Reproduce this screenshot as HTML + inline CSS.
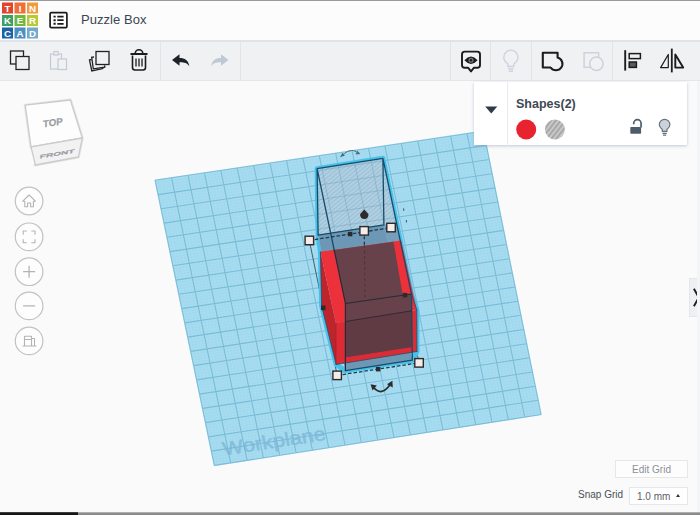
<!DOCTYPE html>
<html><head><meta charset="utf-8"><title>Puzzle Box</title>
<style>
html,body{margin:0;padding:0}
body{width:700px;height:515px;overflow:hidden;position:relative;background:#fafafa;font-family:"Liberation Sans",sans-serif}
#scene{position:absolute;left:0;top:0}
#hdr{position:absolute;left:0;top:0;width:700px;height:40px;background:#fcfcfd;border-top:1px solid #9a9a9a;box-sizing:border-box}
#title{position:absolute;left:81px;top:11px;font-size:13px;color:#3b4550;font-weight:500;letter-spacing:0.05px}
#tb{position:absolute;left:0;top:40px;width:700px;height:41px;background:#f0f1f3;border-top:2px solid #dfe3ea;border-bottom:1px solid #e4e6ea;box-sizing:border-box}
.sep{position:absolute;top:42px;width:1px;height:38px;background:#e2e4e8}
#panel{position:absolute;left:474px;top:81.500px;width:213px;height:63.500px;background:#fff;box-shadow:0 1px 3px rgba(120,140,170,.45)}
#panel .vs{position:absolute;left:33px;top:0;width:1px;height:64px;background:#e8eaee}
#ptitle{position:absolute;left:42px;top:15.5px;font-size:12.5px;font-weight:bold;color:#3f4954}
#editgrid{position:absolute;left:615px;top:460px;width:73px;height:17.500px;border:1px solid #e6e7ea;background:#fdfdfd;font-size:10px;color:#8b9098;text-align:center;line-height:17px;box-sizing:border-box}
#snaplbl{position:absolute;left:578px;top:489px;font-size:10px;color:#4a4f57}
#snapbox{position:absolute;left:629px;top:487px;width:59px;height:18px;border:1px solid #e6e7ea;background:#fff;box-sizing:border-box;font-size:10px;color:#5b6068;line-height:17px;padding-left:7px}
#snapbox i{position:absolute;right:7.500px;top:6px;width:0;height:0;border-left:2.300px solid transparent;border-right:2.300px solid transparent;border-bottom:3px solid #333}
#collapse{position:absolute;left:688.500px;top:278px;width:12px;height:39px;background:#eef0f4;border:1px solid #e3e6eb;box-sizing:border-box}
#bot{position:absolute;left:0;top:512px;width:700px;height:3px;background:linear-gradient(#c4c4c4,#8c8c8c 45%,#8a8a8a)}
#bot b{position:absolute;left:0;top:0.300px;width:78px;height:2.700px;background:linear-gradient(#555,#161616 45%)}
</style></head><body>
<svg id="scene" width="700" height="515" viewBox="0 0 700 515">
<defs>
<pattern id="hatch" width="3.2" height="3.2" patternUnits="userSpaceOnUse" patternTransform="rotate(-40)">
<rect width="3.2" height="1.2" fill="#86a3b8" fill-opacity="0.38"/></pattern>
<pattern id="hatch2" width="3.800" height="3.800" patternUnits="userSpaceOnUse" patternTransform="rotate(-52)">
<rect width="3.800" height="3.800" fill="#c8c8c8"/><rect width="3.800" height="1.800" fill="#a6a6a6"/></pattern>
</defs>
<polygon points="155.2,180.3 483.4,131.2 541.0,414.5 214.4,465.4" fill="#a7dcf1" stroke="#b4e2f3" stroke-width="1.5"/>
<path d="M217.7,464.9L158.5,179.8M213.8,462.5L540.4,411.7M220.9,464.4L161.8,179.3M213.2,459.7L539.8,408.8M224.2,463.9L165.0,178.8M212.6,456.8L539.3,406.0M227.5,463.4L168.3,178.3M212.0,454.0L538.7,403.2M234.0,462.3L174.9,177.4M210.8,448.3L537.5,397.5M237.3,461.8L178.2,176.9M210.3,445.4L537.0,394.7M240.5,461.3L181.5,176.4M209.7,442.6L536.4,391.8M243.8,460.8L184.7,175.9M209.1,439.7L535.8,389.0M250.3,459.8L191.3,174.9M207.9,434.0L534.7,383.3M253.6,459.3L194.6,174.4M207.3,431.2L534.1,380.5M256.9,458.8L197.9,173.9M206.7,428.3L533.5,377.7M260.1,458.3L201.1,173.4M206.1,425.5L532.9,374.8M266.7,457.3L207.7,172.4M204.9,419.8L531.8,369.2M269.9,456.7L211.0,172.0M204.3,416.9L531.2,366.3M273.2,456.2L214.3,171.5M203.7,414.1L530.6,363.5M276.5,455.7L217.6,171.0M203.2,411.2L530.1,360.7M283.0,454.7L224.1,170.0M202.0,405.5L528.9,355.0M286.3,454.2L227.4,169.5M201.4,402.7L528.3,352.2M289.5,453.7L230.7,169.0M200.8,399.8L527.8,349.3M292.8,453.2L234.0,168.5M200.2,397.0L527.2,346.5M299.3,452.2L240.5,167.5M199.0,391.3L526.0,340.8M302.6,451.7L243.8,167.0M198.4,388.4L525.4,338.0M305.8,451.1L247.1,166.6M197.8,385.6L524.9,335.2M309.1,450.6L250.4,166.1M197.2,382.7L524.3,332.3M315.6,449.6L256.9,165.1M196.0,377.0L523.1,326.7M318.9,449.1L260.2,164.6M195.5,374.2L522.6,323.8M322.2,448.6L263.5,164.1M194.9,371.3L522.0,321.0M325.4,448.1L266.8,163.6M194.3,368.5L521.4,318.2M332.0,447.1L273.4,162.6M193.1,362.8L520.3,312.5M335.2,446.6L276.6,162.1M192.5,359.9L519.7,309.7M338.5,446.1L279.9,161.6M191.9,357.1L519.1,306.8M341.8,445.5L283.2,161.2M191.3,354.2L518.5,304.0M348.3,444.5L289.8,160.2M190.1,348.5L517.4,298.3M351.6,444.0L293.0,159.7M189.5,345.7L516.8,295.5M354.8,443.5L296.3,159.2M188.9,342.8L516.2,292.7M358.1,443.0L299.6,158.7M188.4,340.0L515.7,289.8M364.6,442.0L306.2,157.7M187.2,334.3L514.5,284.2M367.9,441.5L309.5,157.2M186.6,331.4L513.9,281.3M371.2,441.0L312.7,156.7M186.0,328.6L513.4,278.5M374.4,440.5L316.0,156.2M185.4,325.7L512.8,275.7M381.0,439.4L322.6,155.3M184.2,320.0L511.6,270.0M384.2,438.9L325.9,154.8M183.6,317.1L511.0,267.2M387.5,438.4L329.1,154.3M183.0,314.3L510.5,264.4M390.8,437.9L332.4,153.8M182.4,311.4L509.9,261.5M397.3,436.9L339.0,152.8M181.2,305.7L508.7,255.9M400.6,436.4L342.3,152.3M180.7,302.9L508.2,253.0M403.8,435.9L345.6,151.8M180.1,300.0L507.6,250.2M407.1,435.4L348.8,151.3M179.5,297.2L507.0,247.4M413.6,434.4L355.4,150.3M178.3,291.5L505.9,241.7M416.9,433.8L358.7,149.9M177.7,288.6L505.3,238.9M420.2,433.3L362.0,149.4M177.1,285.8L504.7,236.0M423.4,432.8L365.2,148.9M176.5,282.9L504.1,233.2M430.0,431.8L371.8,147.9M175.3,277.2L503.0,227.5M433.2,431.3L375.1,147.4M174.7,274.4L502.4,224.7M436.5,430.8L378.4,146.9M174.1,271.5L501.8,221.9M439.8,430.3L381.7,146.4M173.6,268.7L501.3,219.0M446.3,429.3L388.2,145.4M172.4,263.0L500.1,213.4M449.6,428.8L391.5,144.9M171.8,260.1L499.5,210.5M452.8,428.2L394.8,144.5M171.2,257.3L499.0,207.7M456.1,427.7L398.1,144.0M170.6,254.4L498.4,204.9M462.6,426.7L404.6,143.0M169.4,248.7L497.2,199.2M465.9,426.2L407.9,142.5M168.8,245.9L496.6,196.4M469.1,425.7L411.2,142.0M168.2,243.0L496.1,193.5M472.4,425.2L414.5,141.5M167.6,240.2L495.5,190.7M478.9,424.2L421.0,140.5M166.4,234.5L494.3,185.0M482.2,423.7L424.3,140.0M165.9,231.6L493.8,182.2M485.5,423.2L427.6,139.5M165.3,228.8L493.2,179.4M488.7,422.6L430.9,139.1M164.7,225.9L492.6,176.5M495.3,421.6L437.5,138.1M163.5,220.2L491.5,170.9M498.5,421.1L440.7,137.6M162.9,217.4L490.9,168.0M501.8,420.6L444.0,137.1M162.3,214.5L490.3,165.2M505.1,420.1L447.3,136.6M161.7,211.7L489.7,162.4M511.6,419.1L453.9,135.6M160.5,206.0L488.6,156.7M514.9,418.6L457.1,135.1M159.9,203.1L488.0,153.9M518.1,418.1L460.4,134.6M159.3,200.3L487.4,151.0M521.4,417.6L463.7,134.1M158.8,197.4L486.9,148.2M527.9,416.5L470.3,133.2M157.6,191.7L485.7,142.5M531.2,416.0L473.6,132.7M157.0,188.9L485.1,139.7M534.5,415.5L476.8,132.2M156.4,186.0L484.6,136.9M537.7,415.0L480.1,131.7M155.8,183.2L484.0,134.0" stroke="#8ccde4" stroke-width="0.5" opacity="0.28" fill="none"/>
<path d="M214.4,465.4L155.2,180.3M214.4,465.4L541.0,414.5M230.7,462.9L171.6,177.8M211.4,451.1L538.1,400.3M247.1,460.3L188.0,175.4M208.5,436.9L535.2,386.2M263.4,457.8L204.4,172.9M205.5,422.6L532.4,372.0M279.7,455.2L220.8,170.5M202.6,408.4L529.5,357.8M296.1,452.7L237.2,168.0M199.6,394.1L526.6,343.7M312.4,450.1L253.7,165.6M196.6,379.9L523.7,329.5M328.7,447.6L270.1,163.1M193.7,365.6L520.8,315.3M345.0,445.0L286.5,160.7M190.7,351.4L518.0,301.2M361.4,442.5L302.9,158.2M187.8,337.1L515.1,287.0M377.7,439.9L319.3,155.8M184.8,322.9L512.2,272.9M394.0,437.4L335.7,153.3M181.8,308.6L509.3,258.7M410.4,434.9L352.1,150.8M178.9,294.3L506.4,244.5M426.7,432.3L368.5,148.4M175.9,280.1L503.6,230.4M443.0,429.8L384.9,145.9M173.0,265.8L500.7,216.2M459.4,427.2L401.3,143.5M170.0,251.6L497.8,202.0M475.7,424.7L417.8,141.0M167.0,237.3L494.9,187.9M492.0,422.1L434.2,138.6M164.1,223.1L492.0,173.7M508.3,419.6L450.6,136.1M161.1,208.8L489.2,159.5M524.7,417.0L467.0,133.7M158.2,194.6L486.3,145.4M541.0,414.5L483.4,131.2M155.2,180.3L483.4,131.2" stroke="#6fb4d0" stroke-width="1.1" fill="none" opacity="0.8"/>
<text x="0" y="0" transform="matrix(1.1369,-0.1734,0.1990,0.9800,224.0,455.4)" font-family="Liberation Sans, sans-serif" font-weight="normal" font-size="19" fill="#7ab5d6" stroke="#7ab5d6" stroke-width="0.55" opacity="0.72">Workplane</text>
<path d="M309.3,240.4L337.2,375.4M391.0,227.6L419.0,362.8" fill="none" stroke="#1d3b4a" stroke-width="1" opacity="0.75"/>
<polygon points="317.1,168.6 382.9,158.3 411.5,294.0 416.8,310.0 417.0,351.5 412.3,360.2 345.4,370.6 336.1,364.5 321.6,306.0 320.4,251.7 318.1,235.1" fill="none" stroke="#46c1ea" stroke-width="5" stroke-linejoin="round"/>
<polygon points="317.1,168.6 382.9,158.3 411.5,294.0 412.3,360.2 345.4,370.6 318.1,235.1" fill="#b1cfe1" fill-opacity="0.86"/>
<polygon points="317.1,168.6 382.9,158.3 411.5,294.0 412.3,360.2 345.4,370.6 318.1,235.1" fill="url(#hatch)"/>
<clipPath id="cs"><polygon points="317.1,168.6 382.9,158.3 411.5,294.0 412.3,360.2 345.4,370.6 318.1,235.1"/></clipPath>
<path clip-path="url(#cs)" d="M214.4,465.4L155.2,180.3M214.4,465.4L541.0,414.5M230.7,462.9L171.6,177.8M211.4,451.1L538.1,400.3M247.1,460.3L188.0,175.4M208.5,436.9L535.2,386.2M263.4,457.8L204.4,172.9M205.5,422.6L532.4,372.0M279.7,455.2L220.8,170.5M202.6,408.4L529.5,357.8M296.1,452.7L237.2,168.0M199.6,394.1L526.6,343.7M312.4,450.1L253.7,165.6M196.6,379.9L523.7,329.5M328.7,447.6L270.1,163.1M193.7,365.6L520.8,315.3M345.0,445.0L286.5,160.7M190.7,351.4L518.0,301.2M361.4,442.5L302.9,158.2M187.8,337.1L515.1,287.0M377.7,439.9L319.3,155.8M184.8,322.9L512.2,272.9M394.0,437.4L335.7,153.3M181.8,308.6L509.3,258.7M410.4,434.9L352.1,150.8M178.9,294.3L506.4,244.5M426.7,432.3L368.5,148.4M175.9,280.1L503.6,230.4M443.0,429.8L384.9,145.9M173.0,265.8L500.7,216.2M459.4,427.2L401.3,143.5M170.0,251.6L497.8,202.0M475.7,424.7L417.8,141.0M167.0,237.3L494.9,187.9M492.0,422.1L434.2,138.6M164.1,223.1L492.0,173.7M508.3,419.6L450.6,136.1M161.1,208.8L489.2,159.5M524.7,417.0L467.0,133.7M158.2,194.6L486.3,145.4M541.0,414.5L483.4,131.2M155.2,180.3L483.4,131.2" stroke="#6f9fc0" stroke-width="0.8" fill="none" opacity="0.5"/>
<polygon points="318.1,235.1 383.9,224.8 412.3,360.2 345.4,370.6" fill="#6c98b6"/>
<polygon points="383.9,224.8 396.7,223.6 400.6,242.0 387.3,242.0" fill="#759fba"/>
<polygon points="320.4,251.7 335.9,323.0 336.1,364.5 321.6,306.0" fill="#bd242c"/>
<polygon points="335.9,323.0 416.8,310.0 417.0,351.5 336.1,364.5" fill="#dc2b35"/>
<polygon points="320.4,251.7 401.2,240.6 416.8,310.0 335.9,323.0" fill="#ec313b"/>
<polygon points="334.2,250.0 393.5,241.8 402.5,293.8 411.5,294.0 411.7,346.9 345.6,357.2 345.4,303.5" fill="#68424a"/>
<polygon points="345.5,321.5 411.8,310.8 411.7,346.9 345.6,357.2" fill="#603b43"/>
<path d="M317.1,168.6L382.9,158.3M382.9,158.3L411.5,294.0M317.1,168.6L318.1,235.1M382.9,158.3L383.9,224.8M318.1,235.1L383.9,224.8M412.3,360.2L345.4,370.6M317.1,168.6L334.2,250.0M411.5,294.0L412.3,360.2" stroke="#164c69" stroke-width="1.3" fill="none" stroke-linecap="round"/>
<path d="M334.2,250.0L345.4,303.5M345.4,303.5L411.5,294.0M345.4,303.5L345.4,370.6" stroke="#252a3a" stroke-width="1.2" fill="none" stroke-linecap="round"/>
<path d="M411.5,294.0L416.8,310.0M416.8,310.0L417.0,351.5M417.0,351.5L336.1,364.5M336.1,364.5L321.6,306.0M321.6,306.0L320.4,251.7" stroke="#1c4a63" stroke-width="0.9" fill="none" stroke-linecap="round" opacity="0.8"/>
<path d="M345.5,321.5L411.8,310.8" stroke="#2c2430" stroke-width="1" fill="none" opacity="0.85"/>
<path d="M335.9,323.0L336.1,364.5" stroke="#a81c24" stroke-width="0.8" fill="none"/>
<path d="M309.3,240.4L391.0,227.6M337.2,375.4L419.0,362.8" fill="none" stroke="#1d3b4a" stroke-width="1.3" stroke-dasharray="3.5 2"/>
<path d="M364.2,230.8L364.4,245" stroke="#2a2a30" stroke-width="1.2" stroke-dasharray="3 2.5"/>
<path d="M364.4,245L365.0,298.0" stroke="#2a2028" stroke-width="1.1" stroke-dasharray="3 2.5" opacity="0.4"/>
<rect x="305.1" y="236.2" width="8.5" height="8.5" fill="#f6ece8" stroke="#2b2b2b" stroke-width="1.4"/>
<rect x="386.8" y="223.3" width="8.5" height="8.5" fill="#f6ece8" stroke="#2b2b2b" stroke-width="1.4"/>
<rect x="414.8" y="358.6" width="8.5" height="8.5" fill="#f6ece8" stroke="#2b2b2b" stroke-width="1.4"/>
<rect x="332.9" y="371.1" width="8.5" height="8.5" fill="#f6ece8" stroke="#2b2b2b" stroke-width="1.4"/>
<rect x="359.9" y="226.6" width="8.5" height="8.5" fill="#f6ece8" stroke="#2b2b2b" stroke-width="1.4"/>
<rect x="347.9" y="231.8" width="4.5" height="4.5" fill="#2b2b2b"/>
<rect x="402.8" y="292.9" width="4.5" height="4.5" fill="#2b2b2b"/>
<rect x="375.9" y="366.9" width="4.5" height="4.5" fill="#2b2b2b"/>
<rect x="321.0" y="305.6" width="4.5" height="4.5" fill="#2b2b2b"/>
<path d="M364.3,209.5 L368.4,214 A4.2,4.2 0 1 1 360.2,214 Z" fill="#2b2b2b"/>
<g stroke="#2b2b2b" fill="none" stroke-width="1.7" stroke-linecap="round"><path d="M373.8,387.8 Q381.5,396.500 389.800,385"/></g><path d="M370.600,384.300 L376.800,385.500 L372.500,390.600 Z" fill="#2b2b2b"/><path d="M392.400,380.800 L387,384.200 L392.800,387.400 Z" fill="#2b2b2b"/>
<g stroke="#4d6c7e" fill="none" stroke-width="1" stroke-linecap="round" stroke-dasharray="2.2 1"><path d="M342.500,155.300 Q350.500,147.300 357.800,152.600"/></g><path d="M340.200,157.200 L345,155.600 L342.300,152.800 Z" fill="#4d6c7e"/><path d="M360.400,154 L355.600,154.600 L357.300,150.800 Z" fill="#4d6c7e"/>
<path d="M403.700,208.300v2.500M406.400,220v2.500" stroke="#3b5563" stroke-width="1"/>
<!-- view cube -->
<g id="cube">
<polygon points="25.2,105.2 70.4,100 82.3,138 34.800,165 78.400,157 82.300,138 31,146.900" fill="none" stroke="#d9d9d9" stroke-width="3" stroke-linejoin="round" opacity="0.6"/>
<polygon points="25.200,105.200 70.400,100 82.300,138 31,146.900" fill="#fdfdfd" stroke="#cbcbcb" stroke-width="1.300" stroke-linejoin="round"/>
<polygon points="31,146.900 82.300,138 78.400,157 35.400,165" fill="#f2f2f2" stroke="#cbcbcb" stroke-width="1.300" stroke-linejoin="round"/>
<text transform="translate(52.800,126) rotate(-8) skewX(-8)" text-anchor="middle" font-size="9.800" font-weight="bold" fill="#9a9da2" stroke="#9a9da2" stroke-width="0.200">TOP</text>
<text transform="translate(56.800,155.600) rotate(-9.500) skewX(-20) scale(1.300,0.620)" text-anchor="middle" font-size="7.800" font-weight="bold" fill="#9a9da2" stroke="#9a9da2" stroke-width="0.300">FRONT</text>
</g>
<!-- left nav buttons -->
<g fill="#fdfdfd" stroke="#c2c2c2" stroke-width="1.200">
<circle cx="29.1" cy="201" r="13.8"/><circle cx="29.1" cy="236.8" r="13.8"/><circle cx="29.1" cy="271.7" r="13.8"/><circle cx="29.1" cy="305.9" r="13.8"/><circle cx="29.1" cy="340.9" r="13.8"/>
</g>
<g fill="none" stroke="#b4b4b4" stroke-width="1.1" stroke-linejoin="round" stroke-linecap="round">
<path d="M22.8,201.2 L29.1,195 L35.4,201.2 H33.4 V206.8 H30.6 V203 H27.6 V206.8 H24.8 V201.2 Z"/>
<path d="M23.200,234.300V231H26.400 M31.800,231H35V234.300 M35,239.500V242.800H31.800 M26.400,242.800H23.200V239.500"/>
<path d="M23.6,271.7H34.6M29.1,266.2V277.2" stroke-width="1.3"/>
<path d="M23.6,305.9H34.6" stroke-width="1.3"/>
<path d="M24.5,336.2H31.5V346H24.5Z M31.5,338.5H34.5V346H31.5 M24.5,339.5H31.5 M23,346H36"/>
</g>
</svg>

<div id="hdr">
<svg width="700" height="39" style="position:absolute;left:0;top:0">
<g>
<rect x="2" y="1.5" width="11" height="11" fill="#e2452d"/><rect x="14.5" y="1.5" width="11" height="11" fill="#ee6f37"/><rect x="27" y="1.5" width="11" height="11" fill="#f09c3e"/>
<rect x="2" y="14" width="11" height="11" fill="#3f9f63"/><rect x="14.5" y="14" width="11" height="11" fill="#6fb83d"/><rect x="27" y="14" width="11" height="11" fill="#b9c935"/>
<rect x="2" y="26.5" width="11" height="11" fill="#1c64a6"/><rect x="14.5" y="26.5" width="11" height="11" fill="#4a8ec3"/><rect x="27" y="26.5" width="11" height="11" fill="#74a9c9"/>
<g font-family="Liberation Sans, sans-serif" font-weight="bold" font-size="9.8" fill="#fff" text-anchor="middle">
<text x="7.5" y="10.600">T</text><text x="20" y="10.600">I</text><text x="32.5" y="10.600">N</text>
<text x="7.5" y="23.100">K</text><text x="20" y="23.100">E</text><text x="32.5" y="23.100">R</text>
<text x="7.5" y="35.600">C</text><text x="20" y="35.600">A</text><text x="32.5" y="35.600">D</text></g>
</g>
<!-- list icon -->
<g><rect x="50.100" y="11.700" width="16.800" height="15" rx="1.200" fill="#fff" stroke="#1c1c1c" stroke-width="1.700"/>
<path d="M53.500,15.600h2.200M53.500,19.200h2.200M53.500,22.800h2.200" stroke="#1c1c1c" stroke-width="1.900"/>
<path d="M57.300,15.600h6.300M57.300,19.200h6.300M57.300,22.800h6.300" stroke="#1c1c1c" stroke-width="1.700"/></g>
</svg>
<div id="title">Puzzle Box</div>
</div>

<div id="tb"></div>
<div class="sep" style="left:160px"></div><div class="sep" style="left:240px"></div>
<div class="sep" style="left:450px"></div><div class="sep" style="left:490px"></div><div class="sep" style="left:531px"></div><div class="sep" style="left:612px"></div>
<svg width="700" height="40" style="position:absolute;left:0;top:41px" viewBox="0 41 700 40">
<!-- copy -->
<g fill="#f0f1f3" stroke="#222" stroke-width="1.3"><rect x="10.5" y="51" width="13" height="13"/><rect x="16" y="56.5" width="13" height="13"/></g>
<!-- paste (disabled) -->
<g fill="#f0f1f3" stroke="#c3cbd6" stroke-width="1.2"><rect x="50.5" y="54" width="11" height="15"/><rect x="54" y="51.5" width="4" height="3.5"/><rect x="58" y="59" width="8.5" height="10.5"/></g>
<!-- duplicate -->
<g fill="#f0f1f3" stroke="#222" stroke-width="1.3"><path d="M91.5,59.5 l-2,0.4 2.3,11 11,-2.3 -0.3,-1.6"/><path d="M94,57 l-2.3,0.3 1.6,11.5 11.5,-1.6 -0.2,-1.8"/><rect x="96" y="51.5" width="13" height="13"/></g>
<!-- trash -->
<g fill="none" stroke="#1c1c1c" stroke-width="1.6" stroke-linejoin="round"><path d="M132.5,55.5 V67.5 a2.5,2.5 0 0 0 2.5,2.5 h8 a2.5,2.5 0 0 0 2.5,-2.5 V55.5"/><path d="M130.5,54 H147.5" stroke-width="2"/><path d="M135.200,53.500 a3.800,3.800 0 0 1 7.600,0"/><path d="M136,58.5V66.5M139,58.5V66.5M142,58.5V66.5" stroke-width="1.3"/></g>
<!-- undo -->
<path d="M172,60 L179.5,54.3 V58 C185,58 188.5,60.5 189.3,66.3 C187,62.8 184,62.2 179.5,62.3 V65.8 Z" fill="#1e2329"/>
<!-- redo -->
<path d="M228.5,60 L221,54.3 V58 C215.5,58 212,60.5 211.2,66.3 C213.5,62.8 216.5,62.2 221,62.3 V65.8 Z" fill="#bfc9d6"/>
<!-- comment eye -->
<g fill="none" stroke="#1c1c1c" stroke-width="1.9" stroke-linejoin="round"><path d="M464.8,51.6 h12.4 a2.8,2.8 0 0 1 2.8,2.8 v10.600 a2.8,2.8 0 0 1 -2.8,2.8 h-3.4 l-2.8,3.600 -2.8,-3.600 h-3.400 a2.8,2.8 0 0 1 -2.8,-2.8 v-10.600 a2.8,2.8 0 0 1 2.8,-2.8 z"/></g>
<path d="M464.400,60.200 q6.600,-7.400 13.200,0 q-6.600,7.400 -13.200,0 z" fill="#1c1c1c"/><circle cx="471" cy="60.200" r="2.500" fill="#7b7b7b"/><circle cx="471" cy="60.200" r="1.200" fill="#1c1c1c"/>
<!-- bulb disabled -->
<g fill="none" stroke="#ccd4de" stroke-width="1.4"><path d="M508,66.500 v-2.500 c-3,-2.200 -4.200,-4.400 -4.200,-6.800 a7.050,7.050 0 0 1 14.100,0 c0,2.400 -1.200,4.600 -4.200,6.800 v2.500 z"/><path d="M508.200,69h5.400M508.800,71.200h4.200"/></g>
<!-- shape (group) -->
<path d="M542.800,52.800 H557.600 V57.500 A6.500,6.500 0 1 1 550.600,67.500 H542.800 Z" fill="none" stroke="#1c1c1c" stroke-width="2.100" stroke-linejoin="round"/>
<!-- ungroup disabled -->
<g fill="none" stroke="#ccd3dc" stroke-width="1.500"><rect x="584.100" y="52.800" width="14.500" height="14.500"/><circle cx="596.400" cy="63.800" r="6.700" fill="#f0f1f3"/></g>
<!-- align -->
<g fill="none" stroke="#1c1c1c"><path d="M625.200,50.200V70.600" stroke-width="1.900"/><rect x="629.200" y="53.600" width="11.200" height="5" stroke-width="1.500"/><rect x="629.200" y="62" width="7.200" height="5.400" stroke-width="1.500" fill="#5a5a5a"/></g>
<!-- mirror -->
<g fill="none" stroke="#1c1c1c" stroke-linejoin="round"><path d="M671.800,48.600V72.400" stroke-width="1.800"/><path d="M668.300,54.500 V67.600 H660.600 Z" stroke-width="1.200"/><path d="M675.300,54.500 V67.600 H683.200 Z" stroke-width="1.900"/></g>
</svg>

<div id="panel"><div class="vs"></div><div id="ptitle">Shapes(2)</div>
<svg width="213" height="64" style="position:absolute;left:0;top:0">
<path d="M11.200,24.600 h12.100 l-6.050,6.900 z" fill="#2f3b4a"/>
<circle cx="52.200" cy="47.500" r="10" fill="#e8222e"/>
<circle cx="80.900" cy="47.500" r="10" fill="url(#hatch2)"/>
<g><rect x="156.300" y="44.900" width="10.800" height="6.800" rx="0.800" fill="#4f5d6b"/><path d="M159.700,42.300 v-0.900 a3.700,3.700 0 0 1 7.400,0 v4" fill="none" stroke="#4f5d6b" stroke-width="1.700"/></g>
<g fill="none" stroke="#66727e" stroke-width="1.200"><path d="M188.300,49.300 v-1.700 c-2.200,-1.600 -3,-3.200 -3,-5 a5.300,5.300 0 0 1 10.600,0 c0,1.800 -0.800,3.400 -3,5 v1.700 z" fill="#ccd2d9"/><path d="M188.400,51.300h4.400M189,53.100h3.200"/></g>
</svg></div>

<div id="collapse"><svg width="11" height="37" style="position:absolute;left:0;top:0"><path d="M3.900,9.800 L8.800,18.500 L3.900,27.300" fill="none" stroke="#1e1e22" stroke-width="1.9"/></svg></div>
<div id="editgrid">Edit Grid</div>
<div id="snaplbl">Snap Grid</div>
<div id="snapbox">1.0 mm<i></i></div>
<div style="position:absolute;left:696.500px;top:81px;width:3.500px;height:431px;background:#f4f5f7"></div>
<div id="bot"><b></b></div>
</body></html>
